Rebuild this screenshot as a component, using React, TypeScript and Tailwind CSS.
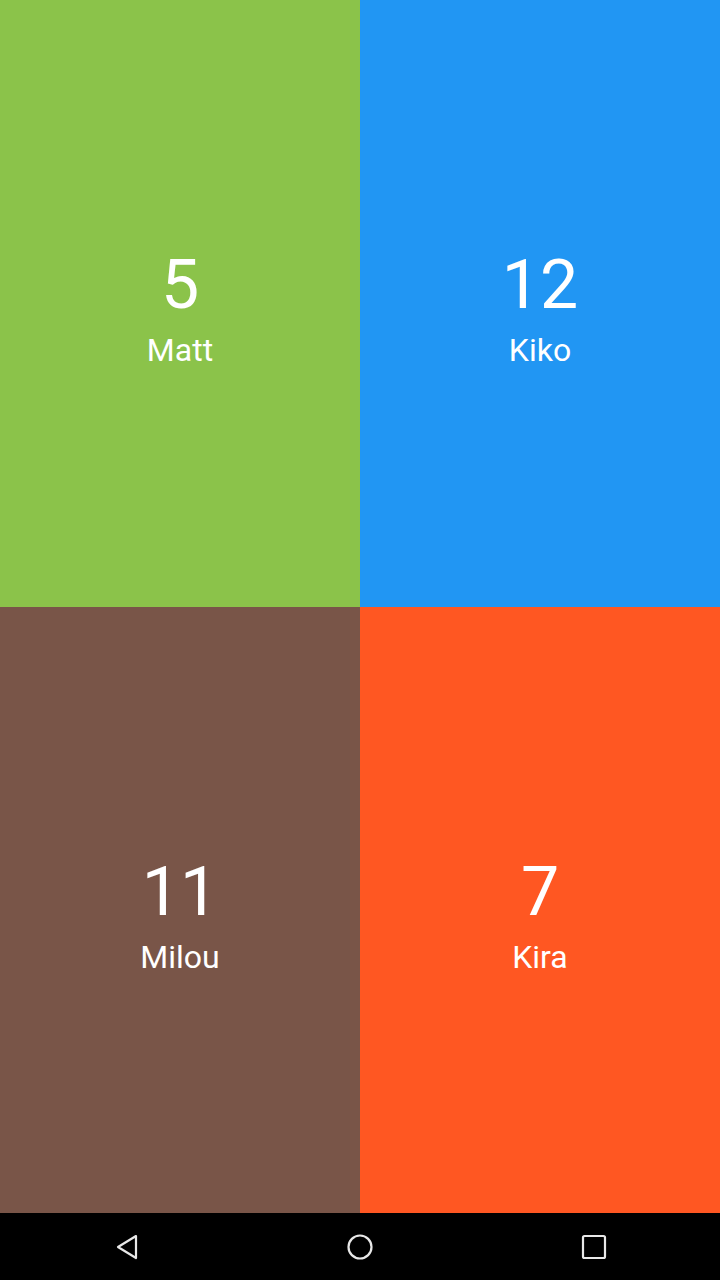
import React from "react";

const players = [
  { name: "Matt", score: 5, bg: "bg-[#8bc34a]" },
  { name: "Kiko", score: 12, bg: "bg-[#2196f3]" },
  { name: "Milou", score: 11, bg: "bg-[#795548]" },
  { name: "Kira", score: 7, bg: "bg-[#ff5722]" },
];

const App = () => {
  return (
    <div className="w-[720px] h-[1280px] flex flex-col font-['Roboto',sans-serif] text-white">
      <div className="grid grid-cols-2 grid-rows-2 flex-1">
        {players.map((p) => (
          <div key={p.name} className={`${p.bg} flex flex-col items-center justify-center pt-[7px]`}>
            <span className="text-[68px] leading-[80px]">{p.score}</span>
            <span className="text-[32px] leading-[36px] mt-[7px]">{p.name}</span>
          </div>
        ))}
      </div>
      <div className="h-[67px] bg-black flex items-center justify-between px-[111px]">
        <svg width="30" height="30" viewBox="0 0 30 30" fill="none" stroke="#e8e8e8" strokeWidth="2.2" strokeLinejoin="round">
          <path d="M25 4 L7 15 L25 26 Z" />
        </svg>
        <svg width="30" height="30" viewBox="0 0 30 30" fill="none" stroke="#e8e8e8" strokeWidth="2.2">
          <circle cx="15" cy="15" r="11.5" />
        </svg>
        <svg width="30" height="30" viewBox="0 0 30 30" fill="none" stroke="#e8e8e8" strokeWidth="2.2" strokeLinejoin="round">
          <rect x="4" y="4" width="22" height="22" rx="1.5" />
        </svg>
      </div>
    </div>
  );
};

export default App;
